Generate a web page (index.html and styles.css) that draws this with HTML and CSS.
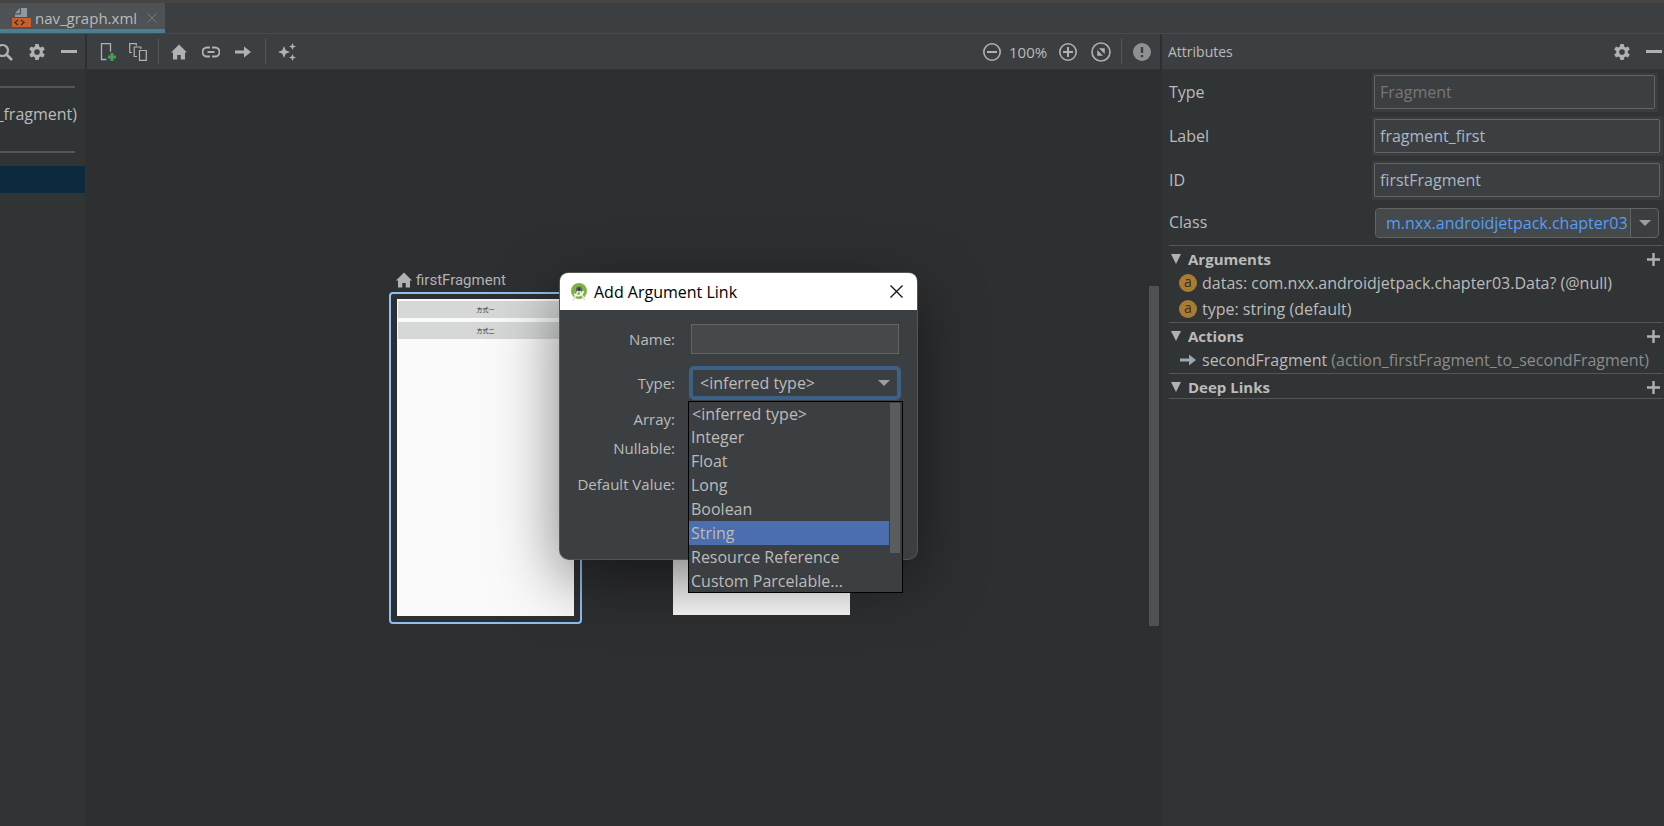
FILE: index.html
```html
<!DOCTYPE html>
<html lang="en">
<head>
<meta charset="utf-8">
<title>nav_graph.xml</title>
<link rel="stylesheet" href="styles.css">
</head>
<body>
<svg class="defs" aria-hidden="true">
  <symbol id="gear" viewBox="0 0 16 16"><path fill-rule="evenodd" d="M6.500 0h3l.4 2.200 1.300.8 2.200-.8 1.500 2.600-1.800 1.500v1.500l1.800 1.500-1.500 2.600-2.200-.8-1.300.8-.4 2.300h-3l-.4-2.300-1.300-.8-2.200.8L1.100 9.300l1.800-1.500V6.300L1.100 4.800l1.500-2.600 2.200.8 1.300-.8zM8 4.600a2.500 2.500 0 1 0 0 5 2.500 2.500 0 0 0 0-5z" transform="translate(0 .9)"/></symbol>
  <symbol id="home" viewBox="0 0 16 15"><path d="M8 0l8 8h-2v7H9.700v-4.500H6.300V15H2V8H0z"/></symbol>
  <symbol id="arrow" viewBox="0 0 16 12"><path d="M0 4.600h9V.6L16 6l-7 5.400v-4H0z"/></symbol>
  <symbol id="plus" viewBox="0 0 13 13"><path d="M5.300 0h2.400v5.300H13v2.400H7.700V13H5.300V7.700H0V5.300h5.300z"/></symbol>
</svg>
<div class="app">
  <header class="tabs">
    <div class="tab">
      <svg class="tab-icon" viewBox="0 0 19 19"><path fill="#9aa7b0" d="M9 0h6v9H3V6.500h6zM7.800 0v5.300H3z" opacity=".85"/><path fill="#c75f2c" d="M0 10h19v9H0z"/><path fill="none" stroke="#432b1e" stroke-width="1.300" d="M6 12l-3 2.500L6 17M9 12l3 2.500L9 17"/></svg>
      <span>nav_graph.xml</span>
      <button class="icon-btn tab-close" aria-label="Close tab"><svg viewBox="0 0 10 10"><path d="M.5.5l9 9M9.500.5l-9 9" stroke="#777a7c"/></svg></button>
    </div>
  </header>
  <main class="panes">
    <aside class="tree">
      <div class="bar tree-bar">
        <button class="icon-btn" aria-label="Search"><svg class="i18" viewBox="0 0 18 18"><circle cx="7.500" cy="7.500" r="5.500" fill="none" stroke="currentColor" stroke-width="2.200"/><path d="M11.500 11.500L17 17" stroke="currentColor" stroke-width="2.600"/></svg></button>
        <button class="icon-btn" aria-label="Settings"><svg class="i18"><use href="#gear"/></svg></button>
        <button class="icon-btn" aria-label="Hide"><i class="dash"></i></button>
      </div>
      <div class="tree-body">
        <hr>
        <p class="host">_fragment)</p>
        <hr>
        <div class="picked"></div>
      </div>
    </aside>
    <section class="design">
      <div class="bar design-bar">
        <button class="icon-btn" aria-label="New destination"><svg class="i18" viewBox="0 0 18 18"><path d="M6.500 16.500h-5V.7h9v8" fill="none" stroke="currentColor" stroke-width="1.300"/><path d="M10.500 10h3v2.500H16v3h-2.500V18h-3v-2.500H8v-3h2.500z" fill="#499c54"/></svg></button>
        <button class="icon-btn group" aria-label="Nested graph"><svg class="i18" viewBox="0 0 18 18"><path d="M3 9.500H.7V.7h6.600v2M8 13.500H5.200V4h6.600v2" fill="none" stroke="currentColor" stroke-width="1.200"/><path d="M10.500 7.500h6.800v9.800h-6.800z" fill="none" stroke="currentColor" stroke-width="1.200"/></svg></button>
        <i class="sep"></i>
        <button class="icon-btn" aria-label="Assign start destination"><svg class="i16"><use href="#home"/></svg></button>
        <button class="icon-btn" aria-label="Add deep link"><svg class="i18" viewBox="0 0 18 18"><path d="M8 4.500H5a4.500 4.500 0 0 0 0 9h3M10 4.500h3a4.500 4.500 0 0 1 0 9h-3M5.500 9h7" fill="none" stroke="currentColor" stroke-width="2"/></svg></button>
        <button class="icon-btn" aria-label="Add action"><svg class="i16"><use href="#arrow"/></svg></button>
        <i class="sep"></i>
        <button class="icon-btn" aria-label="Auto arrange"><svg class="i18" viewBox="0 0 18 18" fill="currentColor"><path d="M6 3l1.700 4.300L12 9l-4.300 1.700L6 15l-1.700-4.300L0 9l4.300-1.700zM14.500 0l1 2.500 2.500 1-2.500 1-1 2.500-1-2.500-2.500-1 2.500-1zM14.500 11l1 2.500 2.500 1-2.500 1-1 2.500-1-2.500-2.500-1 2.500-1z"/></svg></button>
        <div class="zoom">
          <button class="icon-btn" aria-label="Zoom out"><svg class="i18" viewBox="0 0 18 18"><circle cx="9" cy="9" r="8.200"/><path d="M4 9h10" stroke-width="2"/></svg></button>
          <span class="percent">100%</span>
          <button class="icon-btn" aria-label="Zoom in"><svg class="i18" viewBox="0 0 18 18"><circle cx="9" cy="9" r="8.200"/><path d="M4 9h10M9 4v10" stroke-width="2"/></svg></button>
          <button class="icon-btn fit" aria-label="Zoom to fit"><svg class="i20" viewBox="0 0 20 20"><circle cx="10" cy="10" r="9"/><path d="M8.500 6.500h5v5zM6.500 8.500v5h5z" fill="currentColor" stroke-width=".5"/></svg></button>
          <i class="sep"></i>
          <button class="icon-btn" aria-label="Issues"><svg class="i18" viewBox="0 0 18 18"><circle cx="9" cy="9" r="9" fill="#8f9091" stroke="none"/><path d="M9 4v6M9 12v2.200" stroke="#3c3f41" stroke-width="2.400"/></svg></button>
        </div>
      </div>
      <div class="canvas">
        <div class="node-title"><svg class="i16"><use href="#home"/></svg><span>firstFragment</span></div>
        <div class="node first"><div class="screen"><span>方式一</span><span>方式二</span></div></div>
        <div class="node second"></div>
        <div class="thumb"></div>
      </div>
    </section>
    <aside class="attrs">
      <div class="bar attrs-bar">
        <h2>Attributes</h2>
        <button class="icon-btn" aria-label="Settings"><svg class="i18"><use href="#gear"/></svg></button>
        <button class="icon-btn" aria-label="Hide"><i class="dash"></i></button>
      </div>
      <form class="fields">
        <label for="f-type">Type</label><div class="well short"><input id="f-type" value="Fragment" disabled></div>
        <label for="f-label">Label</label><div class="well"><input id="f-label" value="fragment_first"></div>
        <label for="f-id">ID</label><div class="well"><input id="f-id" value="firstFragment"></div>
        <label for="f-class">Class</label>
        <div class="combo"><input id="f-class" value="m.nxx.androidjetpack.chapter03"><button type="button" aria-label="Choose class"><i class="caret"></i></button></div>
      </form>
      <div class="sections">
        <section>
          <h3><i class="tri"></i>Arguments<button class="icon-btn" aria-label="Add argument"><svg class="i13"><use href="#plus"/></svg></button></h3>
          <p><i class="badge">a</i>datas: com.nxx.androidjetpack.chapter03.Data? (@null)</p>
          <p><i class="badge">a</i>type: string (default)</p>
        </section>
        <section>
          <h3><i class="tri"></i>Actions<button class="icon-btn" aria-label="Add action"><svg class="i13"><use href="#plus"/></svg></button></h3>
          <p><svg class="act"><use href="#arrow"/></svg><span>secondFragment <span class="dim">(action_firstFragment_to_secondFragment)</span></span></p>
        </section>
        <section>
          <h3><i class="tri"></i>Deep Links<button class="icon-btn" aria-label="Add deep link"><svg class="i13"><use href="#plus"/></svg></button></h3>
        </section>
      </div>
    </aside>
  </main>
</div>
<div class="dialog" role="dialog" aria-labelledby="dlg-title">
  <div class="dlg-head">
    <svg class="i18" viewBox="0 0 18 18"><circle cx="9" cy="8" r="8" fill="#7cb342"/><path d="M6 8V6.500a3 3 0 0 1 6 0V8z" fill="#596066"/><path d="M8.300 8L3 17.500M9.700 8L15 17.500" fill="none" stroke="#dfe5e0" stroke-width="1.700"/><path d="M4 11c3 3 8 2 9.500-3" fill="none" stroke="#fff" stroke-width="1.500"/><circle cx="9" cy="6.500" r="1.200" fill="#333"/></svg>
    <h1 id="dlg-title">Add Argument Link</h1>
    <button class="icon-btn" aria-label="Close"><svg class="i13" viewBox="0 0 13 13"><path d="M.5.5l12 12M12.500.5l-12 12" stroke="#111" stroke-width="1.300"/></svg></button>
  </div>
  <form class="dlg-body">
    <label for="d-name">Name:</label><input class="text" id="d-name">
    <label for="d-type">Type:</label>
    <div class="pick"><select id="d-type"><option>&lt;inferred type&gt;</option><option>Integer</option><option>Float</option><option>Long</option><option>Boolean</option><option>String</option><option>Resource Reference</option><option>Custom Parcelable...</option></select><i class="caret"></i>
      <div class="menu"><ul role="listbox" aria-label="Type">
        <li role="option" class="lead">&lt;inferred type&gt;</li><li role="option">Integer</li><li role="option">Float</li><li role="option">Long</li><li role="option">Boolean</li><li role="option" aria-selected="true" class="on">String</li><li role="option">Resource Reference</li><li role="option">Custom Parcelable...</li>
      </ul><i class="menu-thumb"></i></div>
    </div>
    <label for="d-array">Array:</label><input type="checkbox" id="d-array">
    <label for="d-null">Nullable:</label><input type="checkbox" id="d-null">
    <label for="d-default">Default Value:</label><input class="text" id="d-default">
  </form>
</div>
</body>
</html>
```
FILE: styles.css
```css
* { box-sizing: border-box; }
body, h1, h2, h3, p, ul { margin: 0; padding: 0; }
body {
  background: #2e2f31;
  color: #bbb;
  font: 16px/24px "Open Sans", "Noto Sans CJK SC", sans-serif;
  overflow: hidden;
}
.defs { display: none; }
svg { display: block; fill: currentColor; flex: none; }
input, select, button { font: inherit; color: inherit; }
.icon-btn { display: flex; padding: 0; border: 0; background: none; color: #afb1b3; flex: none; }
.i13 { width: 13px; height: 13px; }
.i16 { width: 16px; height: 16px; }
.i18 { width: 18px; height: 18px; }
.i20 { width: 20px; height: 20px; }
.app { display: flex; flex-direction: column; height: 100vh; }

/* editor tabs */
.tabs { display: flex; height: 34px; background: #3c3f41; border-top: 3px solid #454442; border-bottom: 1px solid #4b4a49; flex: none; }
.tab { display: flex; align-items: center; padding: 3px 8px 0 12px; background: #4e5254; border-bottom: 4px solid #4a7f8d; font-size: 15px; }
.tab-icon { width: 19px; height: 19px; margin-right: 4px; }
.tab-close { margin-left: 10px; }
.tab-close svg { width: 10px; height: 10px; }

/* panes */
.panes { display: grid; grid-template-columns: 85px 1fr 502px; column-gap: 2px; flex: 1; min-height: 0; }
.bar { display: flex; align-items: center; height: 36px; background: #3c3f41; border-bottom: 1px solid #333638; }
.dash { width: 16px; height: 3px; background: #afb1b3; }
.sep { width: 1px; height: 25px; background: #555758; }

.tree { display: flex; flex-direction: column; background: #313435; overflow: hidden; }
.tree-bar { justify-content: space-between; padding-right: 8px; }
.tree-bar .icon-btn:first-child { margin-left: -5px; }
.tree-body { padding-top: 16px; }
.tree hr { height: 2px; margin: 0 10px 0 0; border: 0; background: #555; }
.host { display: flex; justify-content: flex-end; height: 63px; padding: 14px 8px 0 0; }
.picked { height: 27px; margin-top: 13px; background: #0d293e; }

.design { display: flex; flex-direction: column; min-width: 0; }
.design-bar { padding: 0 9px 0 13px; gap: 15px; }
.design-bar .group { margin: 0 -3px 0 -4px; }
.design-bar > .sep { margin-left: -1px; }
.design-bar .sep + .icon-btn { margin-left: -3px; }
.zoom { display: flex; align-items: center; margin-left: auto; }
.zoom svg { fill: none; stroke: currentColor; stroke-width: 1.600; }
.percent { width: 42px; margin: 0 8px; font-size: 15px; }
.fit { margin: 0 10px 0 14px; }
.design-bar .zoom .sep + .icon-btn { margin-left: 11px; }

.canvas { position: relative; flex: 1; }
.node-title { position: absolute; left: 309px; top: 198px; display: flex; align-items: center; gap: 4px; color: #afb1b3; font: 15px/24px Roboto, sans-serif; }
.node { position: absolute; }
.first { left: 302px; top: 222px; width: 193px; height: 332px; padding: 5px 6px 6px; border: 2px solid #8ebff2; border-radius: 4px; }
.screen { height: 100%; padding: 2px 1px; background: #fafafa; }
.screen span { display: block; height: 17px; margin-bottom: 4px; background: #d6d7d7; color: #333; font: 6px/17px "Noto Sans CJK SC", sans-serif; text-align: center; }
.second { left: 586px; top: 387px; width: 177px; height: 158px; background: #fafafa; }
.thumb { position: absolute; right: 1px; top: 216px; width: 10px; height: 340px; background: #505153; }

/* attributes */
.attrs { background: #313435; min-width: 0; }
.attrs-bar { gap: 15px; padding: 0 2px 0 6px; }
.attrs-bar h2 { flex: 1; padding-top: 1px; font-size: 14px; font-weight: 400; }
.fields { display: grid; grid-template-columns: 1fr 291px; row-gap: 5px; align-items: center; padding: 3px 1px 4px 7px; }
.fields label { padding-bottom: 2px; }
.well { height: 39px; padding: 2px 3px 3px 2px; background: #3a3d3f; }
.well.short { margin-right: 5px; }
.well input { display: block; width: 100%; height: 34px; padding: 0 5px 1px; border: 1px solid #646464; border-radius: 2px; background: #3c3f41; color: #a9b7c6; }
.well input:disabled { color: #777; }
.combo { display: flex; height: 30px; margin: 3px 4px 3px 3px; border: 1px solid #646464; border-radius: 4px; background: #3c3f41; }
.combo input { flex: 1; min-width: 0; padding: 0 0 0 10px; border: 0; border-radius: 3px 0 0 3px; background: #45494a; color: #589df6; }
.combo button { display: flex; align-items: center; justify-content: center; width: 28px; padding: 0; border: 0; border-left: 1px solid #646464; background: none; }
.caret { width: 0; border: 6px solid transparent; border-top-color: #9b9d9e; border-bottom: 0; }
.sections { margin: 0 1px 0 7px; border-bottom: 1px solid #555; }
.sections section { border-top: 1px solid #555; }
.sections h3 { display: flex; align-items: center; height: 24px; padding: 2px 3px 0 2px; font-size: 15px; font-weight: 700; }
.sections h3 .icon-btn { margin-left: auto; }
.tri { margin-right: 7px; border: 5px solid transparent; border-width: 10px 5px 0; border-top-color: #afb1b3; }
.sections p { display: flex; align-items: center; height: 26px; padding-left: 10px; white-space: nowrap; }
.badge { width: 18px; height: 18px; margin-right: 5px; border-radius: 50%; background: #a97c33; color: #3b3020; font: 14px/16px "Open Sans", sans-serif; text-align: center; }
.act { width: 16px; height: 12px; margin: 0 6px 0 1px; color: #9aa7b0; }
.dim { color: #8c8c8c; }

/* dialog */
.dialog { position: absolute; left: 560px; top: 273px; width: 357px; height: 286px; border-radius: 9px; background: #3c3f41; box-shadow: 0 0 0 1px #555, 0 20px 64px rgba(0, 0, 0, .5); }
.dlg-head { display: flex; align-items: center; height: 37px; padding: 0 14px 0 10px; border-radius: 8px 8px 0 0; background: #fff; color: #000; }
.dlg-head h1 { flex: 1; margin-left: 6px; font-size: 16px; font-weight: 400; }
.dlg-body { display: grid; grid-template-columns: 115px 212px; grid-template-rows: 30px 58px 14px 44px 28px; column-gap: 14px; align-items: center; padding-top: 14px; }
.dlg-body > label { font-size: 15px; text-align: right; white-space: nowrap; }
.dlg-body > input { justify-self: start; margin: 0 0 0 2px; }
.dlg-body .text { width: 208px; height: 30px; border: 1px solid #646464; background: #45494a; }
.pick { position: relative; height: 34px; }
.pick select { display: block; width: 100%; height: 34px; padding: 0 7px; appearance: none; border: 4px solid #3d6185; border-radius: 5px; background: #3c3f41; outline: 0; }
.pick > .caret { position: absolute; right: 11px; top: 14px; }
.menu { position: absolute; left: -1px; top: 35px; display: flex; width: 215px; height: 192px; padding-right: 2px; overflow: hidden; border: 1px solid #000; background: #3c3f41; }
.menu ul { flex: 1; margin-right: 1px; list-style: none; }
.menu li { height: 24px; padding-left: 2px; }
.menu .lead { height: 23px; padding-left: 3px; }
.menu .on { background: #4b6eaf; }
.menu-thumb { width: 10px; height: 150px; margin-top: 1px; background: #5a5d5e; }
```
